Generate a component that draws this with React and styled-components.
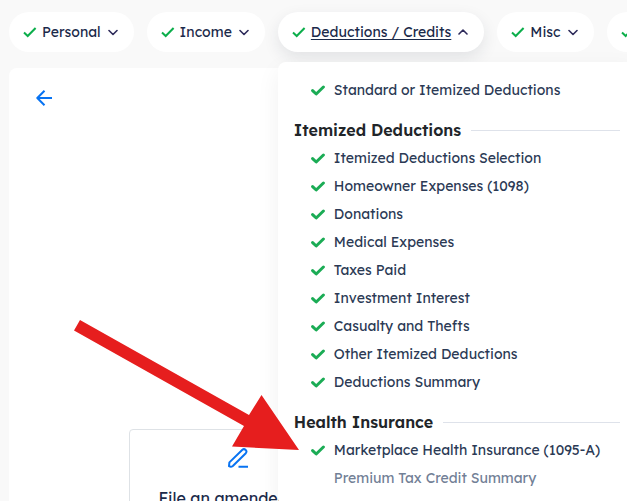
import React from 'react';
import styled, { createGlobalStyle } from 'styled-components';

const GlobalStyle = createGlobalStyle`
    *, *::before, *::after {
        box-sizing: border-box;
    }
    body {
        margin: 0;
        background: #f9f9f9;
        color: #1b2a4a;
        font-family: 'Lexend', 'Inter', 'Noto Sans', sans-serif;
        overflow: hidden;
    }
`;

const sections = [
    {
        items: [{ label: 'Standard or Itemized Deductions', done: true }],
    },
    {
        title: 'Itemized Deductions',
        items: [
            { label: 'Itemized Deductions Selection', done: true },
            { label: 'Homeowner Expenses (1098)', done: true },
            { label: 'Donations', done: true },
            { label: 'Medical Expenses', done: true },
            { label: 'Taxes Paid', done: true },
            { label: 'Investment Interest', done: true },
            { label: 'Casualty and Thefts', done: true },
            { label: 'Other Itemized Deductions', done: true },
            { label: 'Deductions Summary', done: true },
        ],
    },
    {
        title: 'Health Insurance',
        items: [
            { label: 'Marketplace Health Insurance (1095-A)', done: true },
            { label: 'Premium Tax Credit Summary', done: false },
        ],
    },
];

function TabCheck() {
    return (
        <svg width="14" height="14" viewBox="0 0 14 14" fill="none" aria-hidden="true">
            <path d="M1 7.5 4.7 11 12.6 3" stroke="#0cae4b" strokeWidth="2" />
        </svg>
    );
}

function Chevron({ up }) {
    return (
        <svg width="10" height="10" viewBox="0 0 10 10" fill="none" aria-hidden="true">
            <path
                d={up ? 'M1 7 5 3 9 7' : 'M1 3.5 5 7.5 9 3.5'}
                stroke="#2d2a5a"
                strokeWidth="1.6"
                strokeLinecap="round"
                strokeLinejoin="round"
            />
        </svg>
    );
}

function ItemCheck() {
    return (
        <svg width="14" height="14" viewBox="0 0 14 14" fill="none" aria-hidden="true">
            <path d="M1.6 7.6 5.2 11 12.4 4" stroke="#1bac55" strokeWidth="3" strokeLinecap="round" strokeLinejoin="round" />
        </svg>
    );
}

function NavTab({ label, open, children }) {
    return (
        <TabItem>
            <TabButton type="button" $open={open} aria-expanded={!!open}>
                <TabCheck />
                <TabLabel $open={open}>{label}</TabLabel>
                <Chevron up={open} />
            </TabButton>
            {children}
        </TabItem>
    );
}

function MenuSection({ title, items }) {
    return (
        <Section>
            {title && <SectionTitle>{title}</SectionTitle>}
            <ItemList>
                {items.map((item) => (
                    <li key={item.label}>
                        <ItemLink href="#" $done={item.done}>
                            <IconSlot>{item.done && <ItemCheck />}</IconSlot>
                            {item.label}
                        </ItemLink>
                    </li>
                ))}
            </ItemList>
        </Section>
    );
}

function App() {
    return (
        <Page>
            <GlobalStyle />
            <TabBar>
                <NavTab label="Personal" />
                <NavTab label="Income" />
                <NavTab label="Deductions / Credits" open>
                    <Menu>
                        {sections.map((section) => (
                            <MenuSection key={section.items[0].label} {...section} />
                        ))}
                    </Menu>
                </NavTab>
                <NavTab label="Misc" />
                <NavTab />
            </TabBar>

            <Content>
                <BackButton type="button" aria-label="Back">
                    <svg width="16" height="16" viewBox="0 0 16 16" fill="none">
                        <path d="M16 8H1.5M8.500 0.8 1.3 8 8.5 15.2" stroke="#0873f2" strokeWidth="2" strokeLinejoin="round" />
                    </svg>
                </BackButton>
                <OptionCard href="#">
                    <svg width="20" height="20" viewBox="0 0 20 20" fill="none" aria-hidden="true">
                        <path
                            d="M1 18.2 1.4 14.4 14.4 1.7Q16 0.4 17.7 1.9 19.2 3.5 17.8 5.2L4.8 18Q3 19.4 1 18.2ZM10.5 18.8H20"
                            stroke="#0873f2"
                            strokeWidth="2"
                            strokeLinejoin="round"
                        />
                    </svg>
                    <span>File an amended tax return</span>
                </OptionCard>
            </Content>

            {/* Callout arrow pointing at the 1095-A row */}
            <Pointer width="226" height="132" viewBox="0 0 226 132" aria-hidden="true">
                <polygon points="6,0 175,95 187.5,75 225,130 158,126.5 170,106 0,10.5" fill="#e61e1e" />
            </Pointer>
        </Page>
    );
}

const Page = styled.div`
    position: relative;
    height: 100vh;
    overflow: hidden;
    padding: 12px 9px 0;
    display: flex;
    flex-direction: column;
    gap: 16px;
`;

const TabBar = styled.nav`
    position: relative;
    z-index: 1;
    display: flex;
    gap: 13px;
`;

const TabItem = styled.div`
    position: relative;
    flex: none;
`;

const TabButton = styled.button`
    display: flex;
    align-items: center;
    height: 40px;
    padding: 0 16px 0 14px;
    border: 0;
    border-radius: 20px;
    background: #fff;
    color: inherit;
    font: inherit;
    font-size: 14px;
    line-height: 20px;
    box-shadow: ${({ $open }) => ($open ? '0 6px 16px rgba(30, 40, 60, .1)' : 'none')};
    cursor: pointer;
`;

const TabLabel = styled.span`
    margin: 0 7px 0 5px;
    text-decoration: ${({ $open }) => ($open ? 'underline' : 'none')};
    text-underline-offset: 2px;
`;

const Menu = styled.div`
    position: absolute;
    top: 50px;
    left: 0;
    width: 358px;
    padding: 14px 16px;
    border-radius: 8px;
    background: #fff;
    box-shadow: 0 8px 24px rgba(0, 0, 0, .06);
`;

const Section = styled.section`
    & + & {
        margin-top: 12px;
    }
`;

const SectionTitle = styled.h2`
    display: flex;
    align-items: center;
    gap: 10px;
    margin: 0;
    color: #212529;
    font-size: 16px;
    font-weight: 600;
    line-height: 28px;

    &::after {
        content: '';
        flex: 1;
        height: 1px;
        background: #dee2ea;
    }
`;

const ItemList = styled.ul`
    margin: 0;
    padding: 0 0 0 17px;
    list-style: none;
`;

const ItemLink = styled.a`
    display: flex;
    align-items: center;
    gap: 9px;
    color: ${({ $done }) => ($done ? '#2b3a55' : '#728096')};
    font-size: 14px;
    line-height: 28px;
    text-decoration: none;
    white-space: nowrap;
`;

const IconSlot = styled.span`
    display: flex;
    width: 14px;
`;

const Content = styled.main`
    flex: 1;
    padding: 22px 27px;
    border-radius: 8px;
    background: #fff;
`;

const BackButton = styled.button`
    display: block;
    padding: 0;
    border: 0;
    background: none;
    line-height: 0;
    cursor: pointer;
`;

const OptionCard = styled.a`
    display: flex;
    flex-direction: column;
    align-items: center;
    gap: 18px;
    width: 218px;
    margin: 323px 0 0 93px;
    padding: 18px 24px;
    border: 1px solid #dee2e6;
    border-radius: 4px;
    color: #1b2a4a;
    font-size: 16px;
    line-height: 24px;
    text-align: center;
    text-decoration: none;
`;

const Pointer = styled.svg`
    position: absolute;
    z-index: 2;
    top: 320px;
    left: 74px;
    pointer-events: none;
`;

export default App;
